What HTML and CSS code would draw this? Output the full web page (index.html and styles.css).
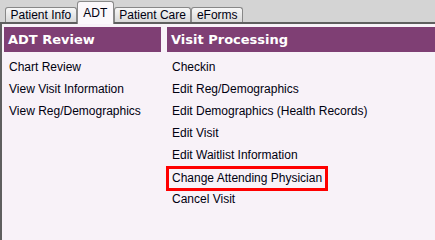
FILE: index.html
```html
<!DOCTYPE html>
<html>
<head>
<meta charset="utf-8">
<link rel="stylesheet" href="styles.css">
</head>
<body>
<div class="tabs">
  <span class="tab">Patient Info</span>
  <span class="tab selected">ADT</span>
  <span class="tab">Patient Care</span>
  <span class="tab">eForms</span>
</div>
<div class="panel">
  <section class="col">
    <h2 class="col-title">ADT Review</h2>
    <ul class="items">
      <li>Chart Review</li>
      <li>View Visit Information</li>
      <li>View Reg/Demographics</li>
    </ul>
  </section>
  <section class="col">
    <h2 class="col-title">Visit Processing</h2>
    <ul class="items">
      <li>Checkin</li>
      <li>Edit Reg/Demographics</li>
      <li>Edit Demographics (Health Records)</li>
      <li>Edit Visit</li>
      <li>Edit Waitlist Information</li>
      <li><span class="hl">Change Attending Physician</span></li>
      <li>Cancel Visit</li>
    </ul>
  </section>
</div>
</body>
</html>
```
FILE: styles.css
```css
html, body {
  margin: 0;
  height: 100%;
}
body {
  display: flex;
  flex-direction: column;
  background: #f8f2f8;
  font-family: "Liberation Sans", Arial, sans-serif;
  font-size: 12px;
  color: #000010;
  overflow: hidden;
}
.tabs {
  flex: none;
  display: flex;
  align-items: flex-end;
  height: 22px;
  background: #d4d4d4;
  padding-left: 5px;
  border-bottom: 2px solid #5f5f5f;
}
.tab {
  height: 14px;
  line-height: 14px;
  padding: 0 4.5px;
  border: 1px solid #888;
  border-bottom: none;
  border-radius: 3px 3px 0 0;
  background: linear-gradient(#f7f7f7, #d9d9d9);
  white-space: nowrap;
}
.tab.selected {
  height: 22px;
  line-height: 22px;
  padding: 0 5.5px;
  margin-bottom: -2px;
  background: #fbf8fb;
  border-color: #8a8a8a;
}
.panel {
  flex: 1;
  min-height: 0;
  display: grid;
  grid-template-columns: 157px 1fr;
  align-items: start;
  column-gap: 6px;
  padding: 3px 0 0 2px;
  border-left: 2px solid #5f5f5f;
}
.col-title {
  margin: 0;
  height: 25px;
  line-height: 25px;
  padding-left: 4px;
  background: #7f3f74;
  color: #fff;
  font-family: "DejaVu Sans", Verdana, sans-serif;
  font-weight: bold;
  font-size: 13px;
  white-space: nowrap;
}
.items {
  list-style: none;
  margin: 0;
  padding: 4px 0 0 5px;
}
.items li {
  height: 22px;
  line-height: 22px;
  white-space: nowrap;
}
.hl {
  display: inline-block;
  line-height: 19px;
  padding: 0 3px;
  margin-left: -6px;
  border: 3px solid #ff0000;
}
```
